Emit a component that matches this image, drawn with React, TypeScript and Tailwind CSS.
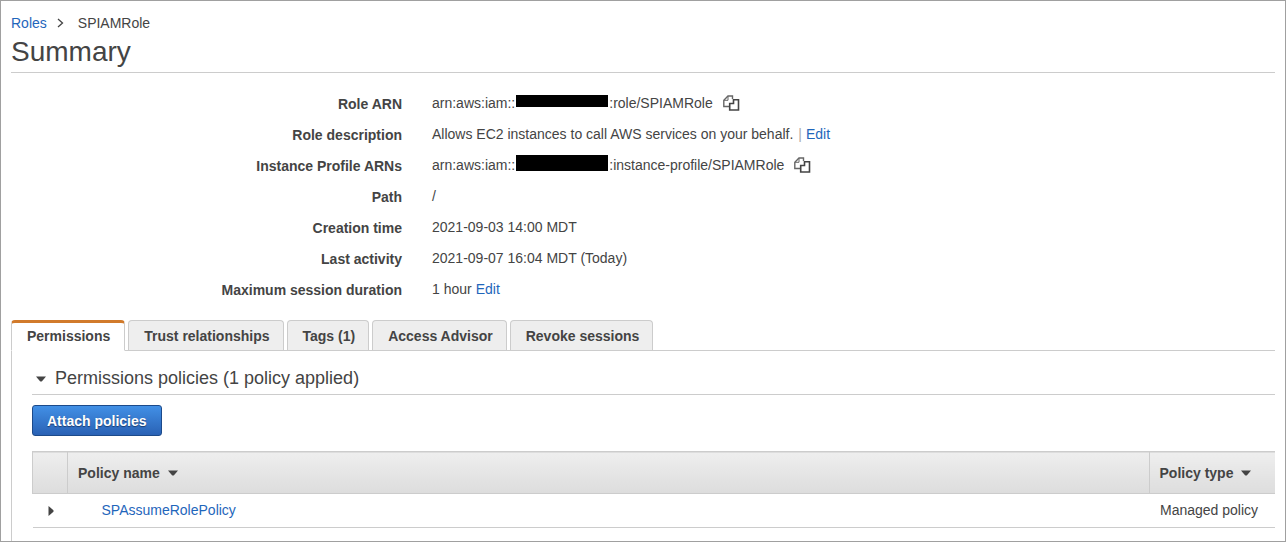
import { useState } from 'react'
import type { ReactNode } from 'react'

const tabs = ['Permissions', 'Trust relationships', 'Tags (1)', 'Access Advisor', 'Revoke sessions']

function CopyIcon() {
    return (
        <svg width="17" height="16" viewBox="0 0 17 16" fill="none" aria-hidden="true">
            <path d="M6 11.5H.8V5.2L5 1h4.5v3" stroke="#666" strokeWidth="1.4" />
            <path d="M1 5.3h4V1" stroke="#666" strokeWidth="1" />
            <path d="M10.5 4.7h5v10.3H6.7V8.5h3.8z" stroke="#444" strokeWidth="1.6" />
        </svg>
    )
}

function CaretDown() {
    return (
        <svg width="10" height="6" viewBox="0 0 10 6" fill="#444" aria-hidden="true">
            <path d="M0 .5h10L6 5.2q-1 .8-2 0z" />
        </svg>
    )
}

function CaretRight() {
    return (
        <svg width="6" height="10" viewBox="0 0 6 10" fill="#444" aria-hidden="true">
            <path d="M.5 0v10L5.2 6q.8-1 0-2z" />
        </svg>
    )
}

function CopyButton({ label }: { label: string }) {
    return (
        <button type="button" aria-label={label} className="ml-2.5">
            <CopyIcon />
        </button>
    )
}

function Detail({ label, children }: { label: string; children: ReactNode }) {
    return (
        <div className="grid grid-cols-[391px_1fr] gap-[30px] leading-[30px]">
            <dt className="pt-px text-right font-bold">{label}</dt>
            <dd className="flex items-center pb-px">{children}</dd>
        </div>
    )
}

export default function App() {
    const [active, setActive] = useState('Permissions')
    const [open, setOpen] = useState(true)

    return (
        <div className="flex min-h-screen flex-col border border-[#a0a0a0] bg-white px-2.5 font-['Liberation_Sans',Arial,sans-serif] text-sm text-[#444]">
            {/* Breadcrumb */}
            <nav aria-label="Breadcrumb" className="flex items-center pt-3">
                <a href="#roles" className="text-[#1f66bb]">Roles</a>
                <svg className="ml-2.5 mr-3.5" width="7" height="10" viewBox="0 0 7 10" fill="none" stroke="#444" strokeWidth="1.3" aria-hidden="true">
                    <path d="M1 1l4.5 4L1 9" />
                </svg>
                <span>SPIAMRole</span>
            </nav>
            <h1 className="border-b border-[#ccc] pb-px text-[28px] leading-[38px]">Summary</h1>

            {/* Role details */}
            <dl className="py-[15px]">
                <Detail label="Role ARN">
                    arn:aws:iam::
                    <span className="mx-px mb-1 h-3 w-[92px] bg-black" />
                    :role/SPIAMRole
                    <CopyButton label="Copy role ARN" />
                </Detail>
                <Detail label="Role description">
                    Allows EC2 instances to call AWS services on your behalf.
                    <span className="ml-[5px] mr-1 text-[#aaa]">|</span>
                    <a href="#edit-description" className="text-[#1f66bb]">Edit</a>
                </Detail>
                <Detail label="Instance Profile ARNs">
                    arn:aws:iam::
                    <span className="mx-px mb-1 h-4 w-[92px] bg-black" />
                    :instance-profile/SPIAMRole
                    <CopyButton label="Copy instance profile ARN" />
                </Detail>
                <Detail label="Path">/</Detail>
                <Detail label="Creation time">2021-09-03 14:00 MDT</Detail>
                <Detail label="Last activity">2021-09-07 16:04 MDT (Today)</Detail>
                <Detail label="Maximum session duration">
                    1 hour
                    <a href="#edit-duration" className="ml-1 text-[#1f66bb]">Edit</a>
                </Detail>
            </dl>

            {/* Tabs */}
            <div role="tablist" className="flex gap-[3px] border-b border-[#ccc]">
                {tabs.map((tab) => (
                    <button
                        key={tab}
                        type="button"
                        role="tab"
                        aria-selected={tab === active}
                        onClick={() => setActive(tab)}
                        className={
                            tab === active
                                ? '-mb-px h-[31px] rounded-t border border-t-[3px] border-[#ccc] border-t-[#d17a2b] border-b-white bg-white pl-[15px] pr-3.5 pb-0.5 font-bold'
                                : 'h-[30px] rounded-t border border-b-0 border-[#ccc] bg-[#eee] pl-[15px] pr-[13px] font-bold'
                        }
                    >
                        {tab}
                    </button>
                ))}
            </div>

            <main className="grow border-l border-[#ccc] pl-5">
                <h2 className="border-b border-[#ccc] pb-0.5 pt-3.5 text-lg">
                    <button type="button" aria-expanded={open} onClick={() => setOpen(!open)} className="flex items-center gap-[9px] pl-1 leading-[27px]">
                        {open ? <CaretDown /> : <CaretRight />}
                        Permissions policies (1 policy applied)
                    </button>
                </h2>

                {open && (
                    <>
                        <button
                            type="button"
                            className="mt-2.5 h-[31px] rounded-[3px] border border-[#1c4a8a] bg-linear-to-b from-[#4290e6] to-[#2a62b5] px-3.5 font-bold text-white text-shadow-[0_1px_1px_#1a3c6e]"
                        >
                            Attach policies
                        </button>

                        <table className="mt-[15px] w-full table-fixed border-collapse text-left">
                            <colgroup>
                                <col className="w-[35px]" />
                                <col />
                                <col className="w-[126px]" />
                            </colgroup>
                            <thead>
                                <tr className="h-[42px] border-y border-[#ccc] bg-linear-to-b from-[#eee] to-[#ddd]">
                                    <th className="border-l border-[#ccc]" aria-label="Details" />
                                    <th className="border-l border-[#ccc] pl-2.5">
                                        <button type="button" className="flex items-center gap-2 font-bold">
                                            Policy name
                                            <CaretDown />
                                        </button>
                                    </th>
                                    <th className="border-l border-[#ccc] pl-2.5">
                                        <button type="button" className="flex items-center gap-2 font-bold">
                                            Policy type
                                            <CaretDown />
                                        </button>
                                    </th>
                                </tr>
                            </thead>
                            <tbody>
                                <tr className="h-[34px] border-b border-[#ccc]">
                                    <td>
                                        <button type="button" aria-label="Show SPAssumeRolePolicy" className="block pl-[15px]">
                                            <CaretRight />
                                        </button>
                                    </td>
                                    <td className="pb-0.5 pl-[34px]">
                                        <a href="#policy" className="text-[#1f66bb]">SPAssumeRolePolicy</a>
                                    </td>
                                    <td className="whitespace-nowrap pb-0.5 pl-[11px]">Managed policy</td>
                                </tr>
                            </tbody>
                        </table>
                    </>
                )}
            </main>
        </div>
    )
}
